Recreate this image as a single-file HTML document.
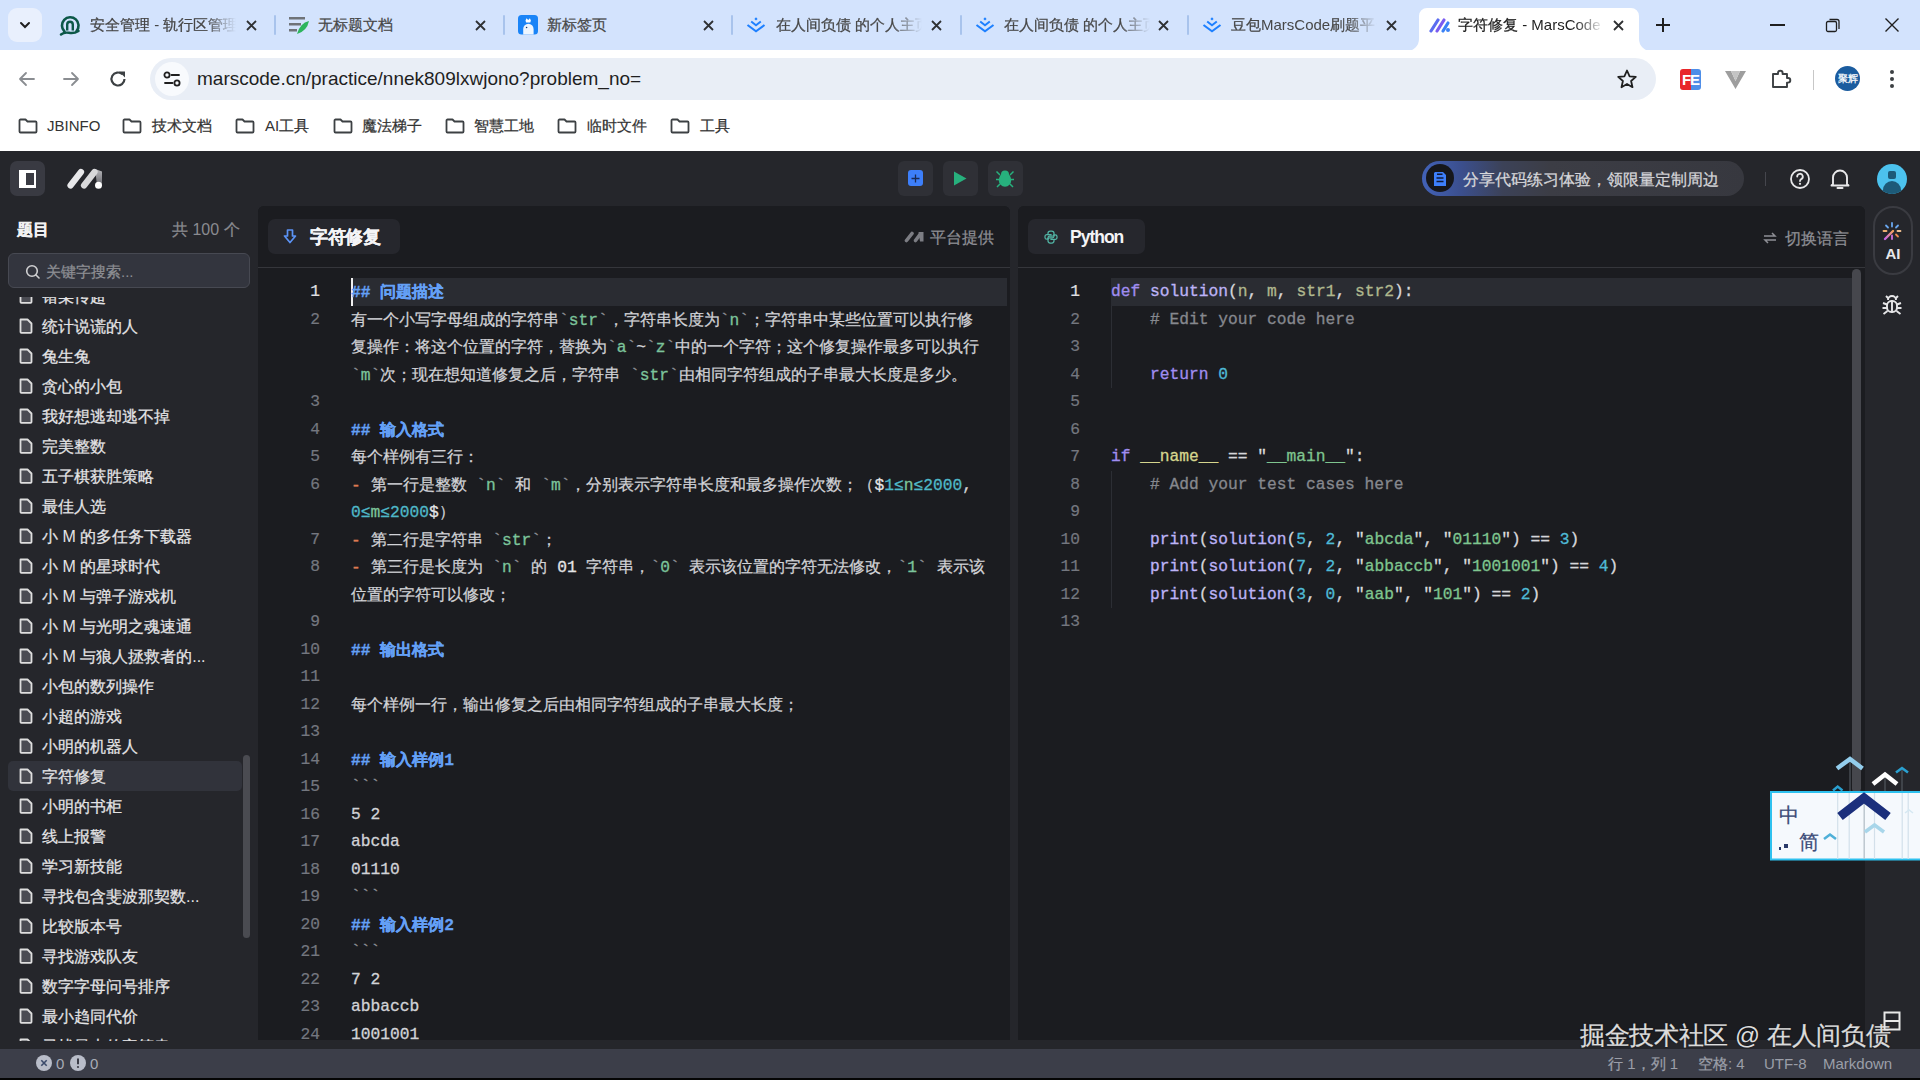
<!DOCTYPE html>
<html><head><meta charset="utf-8">
<style>
*{margin:0;padding:0;box-sizing:border-box}
html,body{width:1920px;height:1080px;overflow:hidden;background:#000;font-family:"Liberation Sans",sans-serif}
.abs{position:absolute}
#tabstrip{position:absolute;left:0;top:0;width:1920px;height:50px;background:#d3e3fd}
#toolbar{position:absolute;left:0;top:50px;width:1920px;height:55px;background:#fff}
#bookmarks{position:absolute;left:0;top:105px;width:1920px;height:46px;background:#fff}
#app{position:absolute;left:0;top:151px;width:1920px;height:929px;background:#25262b}
.tab{position:absolute;top:8px;height:42px;font-size:15px;color:#474747}
.tabtxt{position:absolute;top:16px;font-size:15px;line-height:18px;color:#474747;white-space:nowrap;overflow:hidden}
.fade{-webkit-mask-image:linear-gradient(90deg,#000 80%,transparent 100%)}
.tabx{position:absolute;top:15px;font-size:15px;line-height:18px;color:#1f1f1f;font-weight:bold}
.sep{position:absolute;top:15px;width:2px;height:20px;background:#a8c3ec;border-radius:1px}
.bm{position:absolute;top:12px;font-size:15px;line-height:18px;color:#333;white-space:nowrap}
.folder{position:absolute;top:13px;width:20px;height:16px}
#apphead{position:absolute;left:0;top:0;width:1920px;height:54px}
#sidebar{position:absolute;left:0;top:54px;width:258px;height:843px;background:#25262b}
.item{position:absolute;left:8px;width:234px;height:30px;font-size:16px;line-height:18px;color:#e4e4e6;white-space:nowrap}
.item.sel::before{content:"";position:absolute;left:0;top:-1px;width:100%;height:30px;background:#31333b;border-radius:5px}
.item .ic{position:absolute;left:11px;top:6px}
.item span{position:absolute;left:34px;top:6px}
#lpanel{position:absolute;left:258px;top:55px;width:752px;height:834px;background:#1b1c20;border-radius:6px 6px 0 0;overflow:hidden}
#rpanel{position:absolute;left:1018px;top:55px;width:847px;height:834px;background:#1b1c20;border-radius:6px 6px 0 0;overflow:hidden}
.phead{position:absolute;left:0;top:0;width:100%;height:62px;background:#1b1c20;border-bottom:1px solid #35363b}
.ln{position:absolute;left:12px;width:50px;height:28px;line-height:28px;font-family:"Liberation Mono",monospace;font-size:16.25px;color:#74777f;text-align:right;-webkit-text-stroke:0.2px currentColor}
.ln.act{color:#e0e0e4}
.tx{position:absolute;left:93px;height:28px;line-height:28px;font-family:"Liberation Mono",monospace;font-size:16.25px;color:#d4d4d8;white-space:pre}
.tx i{font-style:normal;-webkit-text-stroke:0.3px currentColor}
.tx i.z{font-family:"Liberation Sans",sans-serif;font-size:16px;-webkit-text-stroke:0}
.hl{background:#2a2c32}
.h{color:#64a0f6;font-weight:bold}.t{color:#d2d3d7}.c{color:#7cc49b}.bt{color:#8d8f95}.lm{color:#dd7a52}.mt{color:#4fb8c8}.mg{color:#7cc49b}.w{color:#e4e4e6}
.kw{color:#a08df0}.fn{color:#bdb3f6}.pa{color:#b0b88e}.cm{color:#86888e}.nu{color:#4fbad6}.st{color:#7fc58f}.op{color:#d6d6da}.q{color:#dcdcdc}.dn{color:#d6d68e}
#status{position:absolute;left:0;top:898px;width:1920px;height:29px;background:#3c3e49;font-size:15px;color:#9a9ca6}
.cj{display:inline-block;width:1em;text-align:center;font-weight:inherit;font-style:normal;-webkit-text-stroke:0.25px currentColor}
</style></head><body>
<div id="tabstrip">
  <div class="abs" style="left:8px;top:8px;width:34px;height:34px;border-radius:9px;background:#e9f0fd"></div>
  <svg class="abs" style="left:18px;top:18px" width="14" height="14" viewBox="0 0 14 14"><path d="M3 5 L7 9 L11 5" stroke="#1f1f1f" stroke-width="2" fill="none" stroke-linecap="round"/></svg>
  <!-- tab1 -->
  <svg class="abs" style="left:59px;top:13px" width="22" height="23" viewBox="0 0 22 23"><path d="M5.5 18.5 A8.3 8.3 0 1 1 17.5 18" stroke="#0c5848" stroke-width="2.6" fill="none" stroke-linecap="round"/><path d="M8.2 17.5 V11.5 a2.8 2.8 0 0 1 5.6 0 V17.5" stroke="#0c5848" stroke-width="2.4" fill="none"/><path d="M2 21.5 Q5 19 10 19.8 Q15 20.8 19.5 18" stroke="#0c5848" stroke-width="2.4" fill="none" stroke-linecap="round"/></svg>
  <div class="tabtxt fade" style="left:90px;width:146px"><b class="cj">安</b><b class="cj">全</b><b class="cj">管</b><b class="cj">理</b> - <b class="cj">轨</b><b class="cj">行</b><b class="cj">区</b><b class="cj">管</b><b class="cj">理</b></div>
  <svg class="abs" style="left:246px;top:20px" width="11" height="11" viewBox="0 0 11 11"><path d="M1 1 L10 10 M10 1 L1 10" stroke="#2f3133" stroke-width="1.8"/></svg>
  <div class="sep" style="left:274px"></div>
  <!-- tab2 -->
  <svg class="abs" style="left:288px;top:15px" width="22" height="20" viewBox="0 0 22 20"><rect x="1" y="2" width="16" height="2.5" fill="#6f7378"/><rect x="1" y="8" width="12" height="2.5" fill="#6f7378"/><rect x="1" y="14" width="8" height="2.5" fill="#6f7378"/><path d="M9 19 Q12 8 21 6 Q19 16 9 19Z" fill="#2db55d"/></svg>
  <div class="tabtxt" style="left:318px;width:150px"><b class="cj">无</b><b class="cj">标</b><b class="cj">题</b><b class="cj">文</b><b class="cj">档</b></div>
  <svg class="abs" style="left:475px;top:20px" width="11" height="11" viewBox="0 0 11 11"><path d="M1 1 L10 10 M10 1 L1 10" stroke="#2f3133" stroke-width="1.8"/></svg>
  <div class="sep" style="left:503px"></div>
  <!-- tab3 -->
  <svg class="abs" style="left:518px;top:15px" width="20" height="20" viewBox="0 0 20 20"><rect x="0" y="0" width="20" height="19.6" rx="3.5" fill="#1a84f7"/><path d="M5.2 19.6 V14 a5.2 5.2 0 0 1 10.4 0 V19.6Z" fill="#eef6ff"/><path d="M7.5 5.5 L8.5 3.2 L10.2 5 L11.9 3.2 L12.9 5.5 L12.3 7.5 H8.1Z" fill="#fff"/><circle cx="8.6" cy="12.5" r="0.8" fill="#1a3a6a"/></svg>
  <div class="tabtxt" style="left:547px;width:150px"><b class="cj">新</b><b class="cj">标</b><b class="cj">签</b><b class="cj">页</b></div>
  <svg class="abs" style="left:703px;top:20px" width="11" height="11" viewBox="0 0 11 11"><path d="M1 1 L10 10 M10 1 L1 10" stroke="#2f3133" stroke-width="1.8"/></svg>
  <div class="sep" style="left:731px"></div>
  <!-- tab4 -->
  <svg class="abs" style="left:746px;top:16px" width="20" height="18" viewBox="0 0 20 18"><path d="M1.5 9 L10 15.3 L18.5 9" stroke="#1e80ff" stroke-width="2.1" fill="none"/><path d="M5.2 5.5 L10 9.2 L14.8 5.5" stroke="#1e80ff" stroke-width="2" fill="none"/><path d="M10 1.3 L11.6 2.9 L10 4.5 L8.4 2.9Z" fill="#1e80ff"/></svg>
  <div class="tabtxt fade" style="left:776px;width:146px"><b class="cj">在</b><b class="cj">人</b><b class="cj">间</b><b class="cj">负</b><b class="cj">债</b> <b class="cj">的</b><b class="cj">个</b><b class="cj">人</b><b class="cj">主</b><b class="cj">页</b></div>
  <svg class="abs" style="left:931px;top:20px" width="11" height="11" viewBox="0 0 11 11"><path d="M1 1 L10 10 M10 1 L1 10" stroke="#2f3133" stroke-width="1.8"/></svg>
  <div class="sep" style="left:960px"></div>
  <!-- tab5 -->
  <svg class="abs" style="left:975px;top:16px" width="20" height="18" viewBox="0 0 20 18"><path d="M1.5 9 L10 15.3 L18.5 9" stroke="#1e80ff" stroke-width="2.1" fill="none"/><path d="M5.2 5.5 L10 9.2 L14.8 5.5" stroke="#1e80ff" stroke-width="2" fill="none"/><path d="M10 1.3 L11.6 2.9 L10 4.5 L8.4 2.9Z" fill="#1e80ff"/></svg>
  <div class="tabtxt fade" style="left:1004px;width:146px"><b class="cj">在</b><b class="cj">人</b><b class="cj">间</b><b class="cj">负</b><b class="cj">债</b> <b class="cj">的</b><b class="cj">个</b><b class="cj">人</b><b class="cj">主</b><b class="cj">页</b></div>
  <svg class="abs" style="left:1158px;top:20px" width="11" height="11" viewBox="0 0 11 11"><path d="M1 1 L10 10 M10 1 L1 10" stroke="#2f3133" stroke-width="1.8"/></svg>
  <div class="sep" style="left:1187px"></div>
  <!-- tab6 -->
  <svg class="abs" style="left:1202px;top:16px" width="20" height="18" viewBox="0 0 20 18"><path d="M1.5 9 L10 15.3 L18.5 9" stroke="#1e80ff" stroke-width="2.1" fill="none"/><path d="M5.2 5.5 L10 9.2 L14.8 5.5" stroke="#1e80ff" stroke-width="2" fill="none"/><path d="M10 1.3 L11.6 2.9 L10 4.5 L8.4 2.9Z" fill="#1e80ff"/></svg>
  <div class="tabtxt fade" style="left:1231px;width:146px"><b class="cj">豆</b><b class="cj">包</b>MarsCode<b class="cj">刷</b><b class="cj">题</b><b class="cj">平</b><b class="cj">台</b></div>
  <svg class="abs" style="left:1386px;top:20px" width="11" height="11" viewBox="0 0 11 11"><path d="M1 1 L10 10 M10 1 L1 10" stroke="#2f3133" stroke-width="1.8"/></svg>
  <!-- active tab -->
  <svg class="abs" style="left:1404px;top:8px" width="250" height="43" viewBox="0 0 250 43"><path d="M3 43 A12 12 0 0 0 15 31 V8 A8 8 0 0 1 23 0 H227 A8 8 0 0 1 235 8 V31 A12 12 0 0 0 247 43 Z" fill="#fff"/></svg>
  <svg class="abs" style="left:1429px;top:16px" width="22" height="18" viewBox="0 0 22 18"><path d="M2 15 L9 4" stroke="#5b6cf0" stroke-width="3.2" stroke-linecap="round"/><path d="M8 15 L15 4" stroke="#7b5cf0" stroke-width="3.2" stroke-linecap="round"/><path d="M14 15 L19 7" stroke="#3b82f6" stroke-width="3.2" stroke-linecap="round"/><circle cx="19" cy="14" r="2" fill="#3b82f6"/></svg>
  <div class="tabtxt fade" style="left:1458px;width:146px;color:#1f1f1f"><b class="cj">字</b><b class="cj">符</b><b class="cj">修</b><b class="cj">复</b> - MarsCode</div>
  <svg class="abs" style="left:1613px;top:20px" width="11" height="11" viewBox="0 0 11 11"><path d="M1 1 L10 10 M10 1 L1 10" stroke="#2f3133" stroke-width="1.8"/></svg>
  <!-- new tab -->
  <svg class="abs" style="left:1654px;top:16px" width="18" height="18" viewBox="0 0 18 18"><path d="M9 2 V16 M2 9 H16" stroke="#1f1f1f" stroke-width="2"/></svg>
  <!-- window controls -->
  <div class="abs" style="left:1770px;top:24px;width:15px;height:1.5px;background:#1f1f1f"></div>
  <svg class="abs" style="left:1824px;top:16px" width="18" height="18" viewBox="0 0 18 18"><rect x="2.5" y="5.5" width="10" height="10" rx="1.5" stroke="#1f1f1f" stroke-width="1.3" fill="none"/><path d="M5.5 3.5 H13 a2 2 0 0 1 2 2 V13" stroke="#1f1f1f" stroke-width="1.3" fill="none"/></svg>
  <svg class="abs" style="left:1884px;top:17px" width="16" height="16" viewBox="0 0 16 16"><path d="M1.5 1.5 L14.5 14.5 M14.5 1.5 L1.5 14.5" stroke="#1f1f1f" stroke-width="1.4"/></svg>
</div>
<div id="toolbar">
  <svg class="abs" style="left:17px;top:19px" width="20" height="20" viewBox="0 0 20 20"><path d="M17 10 H3 M9 4 L3 10 L9 16" stroke="#8a8d91" stroke-width="1.8" fill="none" stroke-linecap="round" stroke-linejoin="round"/></svg>
  <svg class="abs" style="left:61px;top:19px" width="20" height="20" viewBox="0 0 20 20"><path d="M3 10 H17 M11 4 L17 10 L11 16" stroke="#8a8d91" stroke-width="1.8" fill="none" stroke-linecap="round" stroke-linejoin="round"/></svg>
  <svg class="abs" style="left:107px;top:18px" width="22" height="22" viewBox="0 0 22 22"><path d="M17.5 11 A6.5 6.5 0 1 1 15.5 6.3" stroke="#3c4043" stroke-width="2.2" fill="none"/><path d="M12 3.5 H18 V9.5 Z" fill="#3c4043"/></svg>
  <div class="abs" style="left:150px;top:8px;width:1506px;height:42px;border-radius:21px;background:#e9eef6"></div>
  <div class="abs" style="left:155px;top:12px;width:34px;height:34px;border-radius:17px;background:#f8fafd"></div>
  <svg class="abs" style="left:162px;top:20px" width="20" height="18" viewBox="0 0 20 18"><circle cx="5" cy="5" r="2.6" stroke="#1f1f1f" stroke-width="1.8" fill="none"/><path d="M9.5 5 H17" stroke="#1f1f1f" stroke-width="1.8" stroke-linecap="round"/><circle cx="15" cy="13" r="2.6" stroke="#1f1f1f" stroke-width="1.8" fill="none"/><path d="M3 13 H10.5" stroke="#1f1f1f" stroke-width="1.8" stroke-linecap="round"/></svg>
  <div class="abs" style="left:197px;top:18px;font-size:19px;line-height:22px;color:#1f1f1f;white-space:nowrap">marscode.cn/practice/nnek809lxwjono?problem_no=</div>
  <svg class="abs" style="left:1616px;top:18px" width="22" height="22" viewBox="0 0 22 22"><path d="M11 2.5 L13.6 8.3 L19.8 8.9 L15.1 13 L16.5 19.2 L11 16 L5.5 19.2 L6.9 13 L2.2 8.9 L8.4 8.3 Z" stroke="#1f1f1f" stroke-width="1.8" fill="none" stroke-linejoin="round"/></svg>
  <div class="abs" style="left:1680px;top:19px;width:21px;height:21px;border-radius:3px;background:linear-gradient(90deg,#e8262a 50%,#4d8ee8 50%);color:#fff;font-weight:bold;font-size:15px;line-height:21px;text-align:center;letter-spacing:-1px">FE</div>
  <svg class="abs" style="left:1725px;top:20px" width="21" height="19" viewBox="0 0 21 19"><path d="M0 1 H6 L10.5 11 L15 1 H21 L10.5 19 Z" fill="#9e9e9e"/><path d="M6 1 L10.5 11 L15 1" fill="#c4c4c4"/></svg>
  <svg class="abs" style="left:1770px;top:18px" width="22" height="22" viewBox="0 0 22 22"><path d="M3 6 H8 V5 a2.3 2.3 0 0 1 4.6 0 V6 H17 V10 H18 a2.3 2.3 0 0 1 0 4.6 H17 V19 H3 Z" stroke="#3c4043" stroke-width="1.9" fill="none" stroke-linejoin="round"/></svg>
  <div class="abs" style="left:1813px;top:20px;width:1px;height:20px;background:#c7c7c7"></div>
  <div class="abs" style="left:1835px;top:66px;"></div>
  <div class="abs" style="left:1835px;top:16px;width:25px;height:25px;border-radius:50%;background:#1b5c9f;color:#fff;font-size:10px;line-height:25px;text-align:center;letter-spacing:-1px"><b class="cj">聚</b><b class="cj">辉</b></div>
  <svg class="abs" style="left:1886px;top:19px" width="12" height="22" viewBox="0 0 12 22"><circle cx="6" cy="3" r="2" fill="#3c4043"/><circle cx="6" cy="10" r="2" fill="#3c4043"/><circle cx="6" cy="17" r="2" fill="#3c4043"/></svg>
</div>
<div id="bookmarks"><svg class="folder" style="left:18px" width="20" height="16" viewBox="0 0 20 16"><path d="M1.5 2.5 a1 1 0 0 1 1-1 H7.5 L9.5 3.5 H17.5 a1 1 0 0 1 1 1 V13.5 a1 1 0 0 1-1 1 H2.5 a1 1 0 0 1-1-1 Z" stroke="#3c4043" stroke-width="1.8" fill="none" stroke-linejoin="round"/></svg><div class="bm" style="left:47px">JBINFO</div><svg class="folder" style="left:122px" width="20" height="16" viewBox="0 0 20 16"><path d="M1.5 2.5 a1 1 0 0 1 1-1 H7.5 L9.5 3.5 H17.5 a1 1 0 0 1 1 1 V13.5 a1 1 0 0 1-1 1 H2.5 a1 1 0 0 1-1-1 Z" stroke="#3c4043" stroke-width="1.8" fill="none" stroke-linejoin="round"/></svg><div class="bm" style="left:152px"><b class="cj">技</b><b class="cj">术</b><b class="cj">文</b><b class="cj">档</b></div><svg class="folder" style="left:235px" width="20" height="16" viewBox="0 0 20 16"><path d="M1.5 2.5 a1 1 0 0 1 1-1 H7.5 L9.5 3.5 H17.5 a1 1 0 0 1 1 1 V13.5 a1 1 0 0 1-1 1 H2.5 a1 1 0 0 1-1-1 Z" stroke="#3c4043" stroke-width="1.8" fill="none" stroke-linejoin="round"/></svg><div class="bm" style="left:265px">AI<b class="cj">工</b><b class="cj">具</b></div><svg class="folder" style="left:333px" width="20" height="16" viewBox="0 0 20 16"><path d="M1.5 2.5 a1 1 0 0 1 1-1 H7.5 L9.5 3.5 H17.5 a1 1 0 0 1 1 1 V13.5 a1 1 0 0 1-1 1 H2.5 a1 1 0 0 1-1-1 Z" stroke="#3c4043" stroke-width="1.8" fill="none" stroke-linejoin="round"/></svg><div class="bm" style="left:362px"><b class="cj">魔</b><b class="cj">法</b><b class="cj">梯</b><b class="cj">子</b></div><svg class="folder" style="left:445px" width="20" height="16" viewBox="0 0 20 16"><path d="M1.5 2.5 a1 1 0 0 1 1-1 H7.5 L9.5 3.5 H17.5 a1 1 0 0 1 1 1 V13.5 a1 1 0 0 1-1 1 H2.5 a1 1 0 0 1-1-1 Z" stroke="#3c4043" stroke-width="1.8" fill="none" stroke-linejoin="round"/></svg><div class="bm" style="left:474px"><b class="cj">智</b><b class="cj">慧</b><b class="cj">工</b><b class="cj">地</b></div><svg class="folder" style="left:557px" width="20" height="16" viewBox="0 0 20 16"><path d="M1.5 2.5 a1 1 0 0 1 1-1 H7.5 L9.5 3.5 H17.5 a1 1 0 0 1 1 1 V13.5 a1 1 0 0 1-1 1 H2.5 a1 1 0 0 1-1-1 Z" stroke="#3c4043" stroke-width="1.8" fill="none" stroke-linejoin="round"/></svg><div class="bm" style="left:587px"><b class="cj">临</b><b class="cj">时</b><b class="cj">文</b><b class="cj">件</b></div><svg class="folder" style="left:670px" width="20" height="16" viewBox="0 0 20 16"><path d="M1.5 2.5 a1 1 0 0 1 1-1 H7.5 L9.5 3.5 H17.5 a1 1 0 0 1 1 1 V13.5 a1 1 0 0 1-1 1 H2.5 a1 1 0 0 1-1-1 Z" stroke="#3c4043" stroke-width="1.8" fill="none" stroke-linejoin="round"/></svg><div class="bm" style="left:700px"><b class="cj">工</b><b class="cj">具</b></div></div>
<div id="app">
<div id="apphead">
  <div class="abs" style="left:10px;top:10px;width:35px;height:35px;border-radius:7px;background:#393a42"></div>
  <div class="abs" style="left:19px;top:19px;width:17px;height:18px;background:#fff"></div>
  <div class="abs" style="left:26px;top:22px;width:8px;height:12px;background:#3a3b43"></div>
  <svg class="abs" style="left:66px;top:14px" width="38" height="26" viewBox="0 0 38 26"><defs><linearGradient id="lg1" x1="0" y1="0" x2="0" y2="1"><stop offset="0" stop-color="#b8b8bc"/><stop offset="1" stop-color="#6a6a70"/></linearGradient></defs><path d="M4.5 20.5 L15 7" stroke="#e8e8ea" stroke-width="6.2" stroke-linecap="round"/><path d="M29 4 L36 6.5 L36 20 L31 20Z" fill="url(#lg1)"/><path d="M18 20.5 L28.5 7" stroke="#d8d8da" stroke-width="6.2" stroke-linecap="round"/><circle cx="32.5" cy="20.2" r="3.5" fill="#fff"/></svg>
  <div class="abs" style="left:898px;top:10px;width:35px;height:35px;border-radius:6px;background:#2f3036"></div>
  <div class="abs" style="left:908px;top:19px;width:15px;height:16px;border-radius:3px;background:#3d7ffa"></div>
  <svg class="abs" style="left:910px;top:22px" width="11" height="11" viewBox="0 0 11 11"><path d="M5.5 1.5 V9.5 M1.5 5.5 H9.5" stroke="#1a2a55" stroke-width="1.3"/></svg>
  <div class="abs" style="left:943px;top:10px;width:35px;height:35px;border-radius:6px;background:#2f3036"></div>
  <svg class="abs" style="left:953px;top:20px" width="14" height="15" viewBox="0 0 14 15"><path d="M1 0.5 L13.5 7.5 L1 14.5Z" fill="#27b07d"/></svg>
  <div class="abs" style="left:988px;top:10px;width:35px;height:35px;border-radius:6px;background:#2f3036"></div>
  <svg class="abs" style="left:995px;top:18px" width="20" height="19" viewBox="0 0 20 19"><circle cx="10" cy="5.5" r="4" fill="#27b07d"/><ellipse cx="10" cy="11" rx="6.3" ry="6.8" fill="#27b07d"/><path d="M1.5 2.5 L5 6 M18.5 2.5 L15 6 M1 10.5 H4.5 M19 10.5 H15.5 M2 18 L5 15 M18 18 L15 15" stroke="#27b07d" stroke-width="1.5"/></svg>
  <div class="abs" style="left:1422px;top:10px;width:322px;height:35px;border-radius:18px;background:linear-gradient(90deg,#4262b8 0%,#3b4f8e 12%,#3c4258 25%,#3c3d45 40%,#37383f 100%)"></div>
  <div class="abs" style="left:1426px;top:13px;width:28px;height:28px;border-radius:14px;background:#16171b"></div>
  <svg class="abs" style="left:1433px;top:20px" width="14" height="15" viewBox="0 0 14 15"><path d="M2 1 H10 L13 4 V15 H1 V2Z" fill="#3d7ffa"/><path d="M4 3.2 H9.5 M3.5 7 H10.5 M3.5 10.5 H10.5" stroke="#101a38" stroke-width="1.4"/></svg>
  <div class="abs" style="left:1463px;top:19px;font-size:16px;line-height:19px;color:#d6d6da;white-space:nowrap"><b class="cj">分</b><b class="cj">享</b><b class="cj">代</b><b class="cj">码</b><b class="cj">练</b><b class="cj">习</b><b class="cj">体</b><b class="cj">验</b><b class="cj">，</b><b class="cj">领</b><b class="cj">限</b><b class="cj">量</b><b class="cj">定</b><b class="cj">制</b><b class="cj">周</b><b class="cj">边</b></div>
  <div class="abs" style="left:1765px;top:21px;width:1px;height:14px;background:#45464d"></div>
  <svg class="abs" style="left:1789px;top:17px" width="22" height="22" viewBox="0 0 22 22"><circle cx="11" cy="11" r="9" stroke="#e8e8ea" stroke-width="1.8" fill="none"/><path d="M8.2 8.6 a2.8 2.8 0 1 1 4 2.5 c-0.9 0.5 -1.2 1 -1.2 2" stroke="#e8e8ea" stroke-width="1.8" fill="none" stroke-linecap="round"/><circle cx="11" cy="15.8" r="1.1" fill="#e8e8ea"/></svg>
  <svg class="abs" style="left:1829px;top:16px" width="22" height="24" viewBox="0 0 22 24"><path d="M4 17 V10.5 a7 7 0 0 1 14 0 V17 L19.5 18.5 H2.5Z" stroke="#e8e8ea" stroke-width="1.9" fill="none" stroke-linejoin="round"/><path d="M8.5 21 H13.5" stroke="#e8e8ea" stroke-width="2" stroke-linecap="round"/></svg>
  <div class="abs" style="left:1877px;top:13px;width:30px;height:30px;border-radius:50%;background:#4cc2ee;overflow:hidden"><div class="abs" style="left:11px;top:7px;width:8px;height:8px;background:#1d5a78;border-radius:2px"></div><div class="abs" style="left:6px;top:17px;width:18px;height:14px;background:#1d5a78;border-radius:9px 9px 0 0"></div></div>
</div>
  <div id="sidebar">
  <div class="abs" style="left:17px;top:16px;font-size:16px;line-height:18px;font-weight:bold;color:#f2f2f2"><b class="cj">题</b><b class="cj">目</b></div>
  <div class="abs" style="left:172px;top:15px;font-size:16px;line-height:19px;color:#8a8b90;white-space:nowrap"><b class="cj">共</b> 100 <b class="cj">个</b></div>
  <div class="abs" style="left:8px;top:48px;width:242px;height:35px;border-radius:6px;background:#33353e;border:1px solid #474952"></div>
  <svg class="abs" style="left:25px;top:59px" width="16" height="16" viewBox="0 0 16 16"><circle cx="7" cy="7" r="5.3" stroke="#d0d0d2" stroke-width="1.6" fill="none"/><path d="M11 11 L14 14" stroke="#d0d0d2" stroke-width="1.6" stroke-linecap="round"/></svg>
  <div class="abs" style="left:46px;top:58px;font-size:15px;line-height:18px;color:#8e8f94;white-space:nowrap"><b class="cj">关</b><b class="cj">键</b><b class="cj">字</b><b class="cj">搜</b><b class="cj">索</b>...</div>
  <div class="abs" style="left:0;top:92px;width:258px;height:744px;overflow:hidden">
    <div class="item" style="top:-15px"><svg class="ic" width="14" height="16" viewBox="0 0 14 16"><path d="M1.5 1.5 H8.5 L12.5 5.5 V14 a0.8 0.8 0 0 1 -0.8 0.8 H2.3 a0.8 0.8 0 0 1 -0.8 -0.8Z" fill="#4b4c53" stroke="#dedede" stroke-width="1.8" stroke-linejoin="round"/></svg><span><b class="cj">错</b><b class="cj">某</b><b class="cj">传</b><b class="cj">超</b></span></div>
    <div class="item" style="top:15px"><svg class="ic" width="14" height="16" viewBox="0 0 14 16"><path d="M1.5 1.5 H8.5 L12.5 5.5 V14 a0.8 0.8 0 0 1 -0.8 0.8 H2.3 a0.8 0.8 0 0 1 -0.8 -0.8Z" fill="#4b4c53" stroke="#dedede" stroke-width="1.8" stroke-linejoin="round"/></svg><span><b class="cj">统</b><b class="cj">计</b><b class="cj">说</b><b class="cj">谎</b><b class="cj">的</b><b class="cj">人</b></span></div>
    <div class="item" style="top:45px"><svg class="ic" width="14" height="16" viewBox="0 0 14 16"><path d="M1.5 1.5 H8.5 L12.5 5.5 V14 a0.8 0.8 0 0 1 -0.8 0.8 H2.3 a0.8 0.8 0 0 1 -0.8 -0.8Z" fill="#4b4c53" stroke="#dedede" stroke-width="1.8" stroke-linejoin="round"/></svg><span><b class="cj">兔</b><b class="cj">生</b><b class="cj">兔</b></span></div>
    <div class="item" style="top:75px"><svg class="ic" width="14" height="16" viewBox="0 0 14 16"><path d="M1.5 1.5 H8.5 L12.5 5.5 V14 a0.8 0.8 0 0 1 -0.8 0.8 H2.3 a0.8 0.8 0 0 1 -0.8 -0.8Z" fill="#4b4c53" stroke="#dedede" stroke-width="1.8" stroke-linejoin="round"/></svg><span><b class="cj">贪</b><b class="cj">心</b><b class="cj">的</b><b class="cj">小</b><b class="cj">包</b></span></div>
    <div class="item" style="top:105px"><svg class="ic" width="14" height="16" viewBox="0 0 14 16"><path d="M1.5 1.5 H8.5 L12.5 5.5 V14 a0.8 0.8 0 0 1 -0.8 0.8 H2.3 a0.8 0.8 0 0 1 -0.8 -0.8Z" fill="#4b4c53" stroke="#dedede" stroke-width="1.8" stroke-linejoin="round"/></svg><span><b class="cj">我</b><b class="cj">好</b><b class="cj">想</b><b class="cj">逃</b><b class="cj">却</b><b class="cj">逃</b><b class="cj">不</b><b class="cj">掉</b></span></div>
    <div class="item" style="top:135px"><svg class="ic" width="14" height="16" viewBox="0 0 14 16"><path d="M1.5 1.5 H8.5 L12.5 5.5 V14 a0.8 0.8 0 0 1 -0.8 0.8 H2.3 a0.8 0.8 0 0 1 -0.8 -0.8Z" fill="#4b4c53" stroke="#dedede" stroke-width="1.8" stroke-linejoin="round"/></svg><span><b class="cj">完</b><b class="cj">美</b><b class="cj">整</b><b class="cj">数</b></span></div>
    <div class="item" style="top:165px"><svg class="ic" width="14" height="16" viewBox="0 0 14 16"><path d="M1.5 1.5 H8.5 L12.5 5.5 V14 a0.8 0.8 0 0 1 -0.8 0.8 H2.3 a0.8 0.8 0 0 1 -0.8 -0.8Z" fill="#4b4c53" stroke="#dedede" stroke-width="1.8" stroke-linejoin="round"/></svg><span><b class="cj">五</b><b class="cj">子</b><b class="cj">棋</b><b class="cj">获</b><b class="cj">胜</b><b class="cj">策</b><b class="cj">略</b></span></div>
    <div class="item" style="top:195px"><svg class="ic" width="14" height="16" viewBox="0 0 14 16"><path d="M1.5 1.5 H8.5 L12.5 5.5 V14 a0.8 0.8 0 0 1 -0.8 0.8 H2.3 a0.8 0.8 0 0 1 -0.8 -0.8Z" fill="#4b4c53" stroke="#dedede" stroke-width="1.8" stroke-linejoin="round"/></svg><span><b class="cj">最</b><b class="cj">佳</b><b class="cj">人</b><b class="cj">选</b></span></div>
    <div class="item" style="top:225px"><svg class="ic" width="14" height="16" viewBox="0 0 14 16"><path d="M1.5 1.5 H8.5 L12.5 5.5 V14 a0.8 0.8 0 0 1 -0.8 0.8 H2.3 a0.8 0.8 0 0 1 -0.8 -0.8Z" fill="#4b4c53" stroke="#dedede" stroke-width="1.8" stroke-linejoin="round"/></svg><span><b class="cj">小</b> M <b class="cj">的</b><b class="cj">多</b><b class="cj">任</b><b class="cj">务</b><b class="cj">下</b><b class="cj">载</b><b class="cj">器</b></span></div>
    <div class="item" style="top:255px"><svg class="ic" width="14" height="16" viewBox="0 0 14 16"><path d="M1.5 1.5 H8.5 L12.5 5.5 V14 a0.8 0.8 0 0 1 -0.8 0.8 H2.3 a0.8 0.8 0 0 1 -0.8 -0.8Z" fill="#4b4c53" stroke="#dedede" stroke-width="1.8" stroke-linejoin="round"/></svg><span><b class="cj">小</b> M <b class="cj">的</b><b class="cj">星</b><b class="cj">球</b><b class="cj">时</b><b class="cj">代</b></span></div>
    <div class="item" style="top:285px"><svg class="ic" width="14" height="16" viewBox="0 0 14 16"><path d="M1.5 1.5 H8.5 L12.5 5.5 V14 a0.8 0.8 0 0 1 -0.8 0.8 H2.3 a0.8 0.8 0 0 1 -0.8 -0.8Z" fill="#4b4c53" stroke="#dedede" stroke-width="1.8" stroke-linejoin="round"/></svg><span><b class="cj">小</b> M <b class="cj">与</b><b class="cj">弹</b><b class="cj">子</b><b class="cj">游</b><b class="cj">戏</b><b class="cj">机</b></span></div>
    <div class="item" style="top:315px"><svg class="ic" width="14" height="16" viewBox="0 0 14 16"><path d="M1.5 1.5 H8.5 L12.5 5.5 V14 a0.8 0.8 0 0 1 -0.8 0.8 H2.3 a0.8 0.8 0 0 1 -0.8 -0.8Z" fill="#4b4c53" stroke="#dedede" stroke-width="1.8" stroke-linejoin="round"/></svg><span><b class="cj">小</b> M <b class="cj">与</b><b class="cj">光</b><b class="cj">明</b><b class="cj">之</b><b class="cj">魂</b><b class="cj">速</b><b class="cj">通</b></span></div>
    <div class="item" style="top:345px"><svg class="ic" width="14" height="16" viewBox="0 0 14 16"><path d="M1.5 1.5 H8.5 L12.5 5.5 V14 a0.8 0.8 0 0 1 -0.8 0.8 H2.3 a0.8 0.8 0 0 1 -0.8 -0.8Z" fill="#4b4c53" stroke="#dedede" stroke-width="1.8" stroke-linejoin="round"/></svg><span><b class="cj">小</b> M <b class="cj">与</b><b class="cj">狼</b><b class="cj">人</b><b class="cj">拯</b><b class="cj">救</b><b class="cj">者</b><b class="cj">的</b>...</span></div>
    <div class="item" style="top:375px"><svg class="ic" width="14" height="16" viewBox="0 0 14 16"><path d="M1.5 1.5 H8.5 L12.5 5.5 V14 a0.8 0.8 0 0 1 -0.8 0.8 H2.3 a0.8 0.8 0 0 1 -0.8 -0.8Z" fill="#4b4c53" stroke="#dedede" stroke-width="1.8" stroke-linejoin="round"/></svg><span><b class="cj">小</b><b class="cj">包</b><b class="cj">的</b><b class="cj">数</b><b class="cj">列</b><b class="cj">操</b><b class="cj">作</b></span></div>
    <div class="item" style="top:405px"><svg class="ic" width="14" height="16" viewBox="0 0 14 16"><path d="M1.5 1.5 H8.5 L12.5 5.5 V14 a0.8 0.8 0 0 1 -0.8 0.8 H2.3 a0.8 0.8 0 0 1 -0.8 -0.8Z" fill="#4b4c53" stroke="#dedede" stroke-width="1.8" stroke-linejoin="round"/></svg><span><b class="cj">小</b><b class="cj">超</b><b class="cj">的</b><b class="cj">游</b><b class="cj">戏</b></span></div>
    <div class="item" style="top:435px"><svg class="ic" width="14" height="16" viewBox="0 0 14 16"><path d="M1.5 1.5 H8.5 L12.5 5.5 V14 a0.8 0.8 0 0 1 -0.8 0.8 H2.3 a0.8 0.8 0 0 1 -0.8 -0.8Z" fill="#4b4c53" stroke="#dedede" stroke-width="1.8" stroke-linejoin="round"/></svg><span><b class="cj">小</b><b class="cj">明</b><b class="cj">的</b><b class="cj">机</b><b class="cj">器</b><b class="cj">人</b></span></div>
    <div class="item sel" style="top:465px"><svg class="ic" width="14" height="16" viewBox="0 0 14 16"><path d="M1.5 1.5 H8.5 L12.5 5.5 V14 a0.8 0.8 0 0 1 -0.8 0.8 H2.3 a0.8 0.8 0 0 1 -0.8 -0.8Z" fill="#4b4c53" stroke="#dedede" stroke-width="1.8" stroke-linejoin="round"/></svg><span><b class="cj">字</b><b class="cj">符</b><b class="cj">修</b><b class="cj">复</b></span></div>
    <div class="item" style="top:495px"><svg class="ic" width="14" height="16" viewBox="0 0 14 16"><path d="M1.5 1.5 H8.5 L12.5 5.5 V14 a0.8 0.8 0 0 1 -0.8 0.8 H2.3 a0.8 0.8 0 0 1 -0.8 -0.8Z" fill="#4b4c53" stroke="#dedede" stroke-width="1.8" stroke-linejoin="round"/></svg><span><b class="cj">小</b><b class="cj">明</b><b class="cj">的</b><b class="cj">书</b><b class="cj">柜</b></span></div>
    <div class="item" style="top:525px"><svg class="ic" width="14" height="16" viewBox="0 0 14 16"><path d="M1.5 1.5 H8.5 L12.5 5.5 V14 a0.8 0.8 0 0 1 -0.8 0.8 H2.3 a0.8 0.8 0 0 1 -0.8 -0.8Z" fill="#4b4c53" stroke="#dedede" stroke-width="1.8" stroke-linejoin="round"/></svg><span><b class="cj">线</b><b class="cj">上</b><b class="cj">报</b><b class="cj">警</b></span></div>
    <div class="item" style="top:555px"><svg class="ic" width="14" height="16" viewBox="0 0 14 16"><path d="M1.5 1.5 H8.5 L12.5 5.5 V14 a0.8 0.8 0 0 1 -0.8 0.8 H2.3 a0.8 0.8 0 0 1 -0.8 -0.8Z" fill="#4b4c53" stroke="#dedede" stroke-width="1.8" stroke-linejoin="round"/></svg><span><b class="cj">学</b><b class="cj">习</b><b class="cj">新</b><b class="cj">技</b><b class="cj">能</b></span></div>
    <div class="item" style="top:585px"><svg class="ic" width="14" height="16" viewBox="0 0 14 16"><path d="M1.5 1.5 H8.5 L12.5 5.5 V14 a0.8 0.8 0 0 1 -0.8 0.8 H2.3 a0.8 0.8 0 0 1 -0.8 -0.8Z" fill="#4b4c53" stroke="#dedede" stroke-width="1.8" stroke-linejoin="round"/></svg><span><b class="cj">寻</b><b class="cj">找</b><b class="cj">包</b><b class="cj">含</b><b class="cj">斐</b><b class="cj">波</b><b class="cj">那</b><b class="cj">契</b><b class="cj">数</b>...</span></div>
    <div class="item" style="top:615px"><svg class="ic" width="14" height="16" viewBox="0 0 14 16"><path d="M1.5 1.5 H8.5 L12.5 5.5 V14 a0.8 0.8 0 0 1 -0.8 0.8 H2.3 a0.8 0.8 0 0 1 -0.8 -0.8Z" fill="#4b4c53" stroke="#dedede" stroke-width="1.8" stroke-linejoin="round"/></svg><span><b class="cj">比</b><b class="cj">较</b><b class="cj">版</b><b class="cj">本</b><b class="cj">号</b></span></div>
    <div class="item" style="top:645px"><svg class="ic" width="14" height="16" viewBox="0 0 14 16"><path d="M1.5 1.5 H8.5 L12.5 5.5 V14 a0.8 0.8 0 0 1 -0.8 0.8 H2.3 a0.8 0.8 0 0 1 -0.8 -0.8Z" fill="#4b4c53" stroke="#dedede" stroke-width="1.8" stroke-linejoin="round"/></svg><span><b class="cj">寻</b><b class="cj">找</b><b class="cj">游</b><b class="cj">戏</b><b class="cj">队</b><b class="cj">友</b></span></div>
    <div class="item" style="top:675px"><svg class="ic" width="14" height="16" viewBox="0 0 14 16"><path d="M1.5 1.5 H8.5 L12.5 5.5 V14 a0.8 0.8 0 0 1 -0.8 0.8 H2.3 a0.8 0.8 0 0 1 -0.8 -0.8Z" fill="#4b4c53" stroke="#dedede" stroke-width="1.8" stroke-linejoin="round"/></svg><span><b class="cj">数</b><b class="cj">字</b><b class="cj">字</b><b class="cj">母</b><b class="cj">问</b><b class="cj">号</b><b class="cj">排</b><b class="cj">序</b></span></div>
    <div class="item" style="top:705px"><svg class="ic" width="14" height="16" viewBox="0 0 14 16"><path d="M1.5 1.5 H8.5 L12.5 5.5 V14 a0.8 0.8 0 0 1 -0.8 0.8 H2.3 a0.8 0.8 0 0 1 -0.8 -0.8Z" fill="#4b4c53" stroke="#dedede" stroke-width="1.8" stroke-linejoin="round"/></svg><span><b class="cj">最</b><b class="cj">小</b><b class="cj">趋</b><b class="cj">同</b><b class="cj">代</b><b class="cj">价</b></span></div>
    <div class="item" style="top:735px"><svg class="ic" width="14" height="16" viewBox="0 0 14 16"><path d="M1.5 1.5 H8.5 L12.5 5.5 V14 a0.8 0.8 0 0 1 -0.8 0.8 H2.3 a0.8 0.8 0 0 1 -0.8 -0.8Z" fill="#4b4c53" stroke="#dedede" stroke-width="1.8" stroke-linejoin="round"/></svg><span><b class="cj">寻</b><b class="cj">找</b><b class="cj">最</b><b class="cj">大</b><b class="cj">的</b><b class="cj">字</b><b class="cj">符</b><b class="cj">串</b></span></div>
  </div>
  <div class="abs" style="left:243px;top:550px;width:7px;height:183px;border-radius:4px;background:#4a4b51"></div>
</div>
  <div id="lpanel"><div class="phead">
    <div class="abs" style="left:10px;top:13px;width:132px;height:35px;border-radius:7px;background:#26272d"></div>
    <svg class="abs" style="left:25px;top:23px" width="14" height="15" viewBox="0 0 14 15"><path d="M4.5 1 H9.5 V7 H12.5 L7 13.5 L1.5 7 H4.5Z" stroke="#5b93f5" stroke-width="1.7" fill="none" stroke-linejoin="round"/></svg>
    <div class="abs" style="left:52px;top:21px;font-size:17.5px;line-height:20px;font-weight:bold;color:#f4f4f6;white-space:nowrap"><b class="cj">字</b><b class="cj">符</b><b class="cj">修</b><b class="cj">复</b></div>
    <svg class="abs" style="left:646px;top:24px" width="22" height="14" viewBox="0 0 22 14"><path d="M2.5 10.5 L8 3.5" stroke="#7c7d83" stroke-width="3.6" stroke-linecap="round"/><path d="M11.5 10.5 L16 4.5" stroke="#7c7d83" stroke-width="3.6" stroke-linecap="round"/><path d="M14.5 2 L19.5 2 L19.5 11.5 L16 11.5 Z" fill="#7c7d83"/></svg>
    <div class="abs" style="left:672px;top:22px;font-size:16px;line-height:19px;color:#8e8f95;white-space:nowrap"><b class="cj">平</b><b class="cj">台</b><b class="cj">提</b><b class="cj">供</b></div>
  </div>
  <div class="abs hl" style="left:93px;top:72px;width:656px;height:28px"></div>
  <div class="abs" style="left:93px;top:72px;width:2px;height:28px;background:#f0f0f0"></div>
  <!--LEFT--><div class="ln act" style="top:72.0px">1</div><div class="tx" style="top:72.0px"><i class="h">## </i><i class="z h"><b class="cj">问</b><b class="cj">题</b><b class="cj">描</b><b class="cj">述</b></i></div>
<div class="ln" style="top:99.5px">2</div><div class="tx" style="top:99.5px"><i class="z t"><b class="cj">有</b><b class="cj">一</b><b class="cj">个</b><b class="cj">小</b><b class="cj">写</b><b class="cj">字</b><b class="cj">母</b><b class="cj">组</b><b class="cj">成</b><b class="cj">的</b><b class="cj">字</b><b class="cj">符</b><b class="cj">串</b></i><i class="bt">`</i><i class="c">str</i><i class="bt">`</i><i class="z t"><b class="cj">，</b><b class="cj">字</b><b class="cj">符</b><b class="cj">串</b><b class="cj">长</b><b class="cj">度</b><b class="cj">为</b></i><i class="bt">`</i><i class="c">n</i><i class="bt">`</i><i class="z t"><b class="cj">；</b><b class="cj">字</b><b class="cj">符</b><b class="cj">串</b><b class="cj">中</b><b class="cj">某</b><b class="cj">些</b><b class="cj">位</b><b class="cj">置</b><b class="cj">可</b><b class="cj">以</b><b class="cj">执</b><b class="cj">行</b><b class="cj">修</b></i></div>
<div class="tx" style="top:127.0px"><i class="z t"><b class="cj">复</b><b class="cj">操</b><b class="cj">作</b><b class="cj">：</b><b class="cj">将</b><b class="cj">这</b><b class="cj">个</b><b class="cj">位</b><b class="cj">置</b><b class="cj">的</b><b class="cj">字</b><b class="cj">符</b><b class="cj">，</b><b class="cj">替</b><b class="cj">换</b><b class="cj">为</b></i><i class="bt">`</i><i class="c">a</i><i class="bt">`</i><i class="t">~</i><i class="bt">`</i><i class="c">z</i><i class="bt">`</i><i class="z t"><b class="cj">中</b><b class="cj">的</b><b class="cj">一</b><b class="cj">个</b><b class="cj">字</b><b class="cj">符</b><b class="cj">；</b><b class="cj">这</b><b class="cj">个</b><b class="cj">修</b><b class="cj">复</b><b class="cj">操</b><b class="cj">作</b><b class="cj">最</b><b class="cj">多</b><b class="cj">可</b><b class="cj">以</b><b class="cj">执</b><b class="cj">行</b></i></div>
<div class="tx" style="top:154.5px"><i class="bt">`</i><i class="c">m</i><i class="bt">`</i><i class="z t"><b class="cj">次</b><b class="cj">；</b><b class="cj">现</b><b class="cj">在</b><b class="cj">想</b><b class="cj">知</b><b class="cj">道</b><b class="cj">修</b><b class="cj">复</b><b class="cj">之</b><b class="cj">后</b><b class="cj">，</b><b class="cj">字</b><b class="cj">符</b><b class="cj">串</b></i><i class="t"> </i><i class="bt">`</i><i class="c">str</i><i class="bt">`</i><i class="z t"><b class="cj">由</b><b class="cj">相</b><b class="cj">同</b><b class="cj">字</b><b class="cj">符</b><b class="cj">组</b><b class="cj">成</b><b class="cj">的</b><b class="cj">子</b><b class="cj">串</b><b class="cj">最</b><b class="cj">大</b><b class="cj">长</b><b class="cj">度</b><b class="cj">是</b><b class="cj">多</b><b class="cj">少</b><b class="cj">。</b></i></div>
<div class="ln" style="top:182.0px">3</div>
<div class="ln" style="top:209.5px">4</div><div class="tx" style="top:209.5px"><i class="h">## </i><i class="z h"><b class="cj">输</b><b class="cj">入</b><b class="cj">格</b><b class="cj">式</b></i></div>
<div class="ln" style="top:237.0px">5</div><div class="tx" style="top:237.0px"><i class="z t"><b class="cj">每</b><b class="cj">个</b><b class="cj">样</b><b class="cj">例</b><b class="cj">有</b><b class="cj">三</b><b class="cj">行</b><b class="cj">：</b></i></div>
<div class="ln" style="top:264.5px">6</div><div class="tx" style="top:264.5px"><i class="lm">-</i><i class="t"> </i><i class="z t"><b class="cj">第</b><b class="cj">一</b><b class="cj">行</b><b class="cj">是</b><b class="cj">整</b><b class="cj">数</b></i><i class="t"> </i><i class="bt">`</i><i class="c">n</i><i class="bt">`</i><i class="t"> </i><i class="z t"><b class="cj">和</b></i><i class="t"> </i><i class="bt">`</i><i class="c">m</i><i class="bt">`</i><i class="z t"><b class="cj">，</b><b class="cj">分</b><b class="cj">别</b><b class="cj">表</b><b class="cj">示</b><b class="cj">字</b><b class="cj">符</b><b class="cj">串</b><b class="cj">长</b><b class="cj">度</b><b class="cj">和</b><b class="cj">最</b><b class="cj">多</b><b class="cj">操</b><b class="cj">作</b><b class="cj">次</b><b class="cj">数</b><b class="cj">；</b><b class="cj">（</b></i><i class="w">$</i><i class="mt">1</i><i class="mt">≤</i><i class="mg">n</i><i class="mt">≤</i><i class="mt">2000</i><i class="t">,</i></div>
<div class="tx" style="top:292.0px"><i class="mt">0</i><i class="mt">≤</i><i class="mg">m</i><i class="mt">≤</i><i class="mt">2000</i><i class="w">$</i><i class="z t"><b class="cj">）</b></i></div>
<div class="ln" style="top:319.5px">7</div><div class="tx" style="top:319.5px"><i class="lm">-</i><i class="t"> </i><i class="z t"><b class="cj">第</b><b class="cj">二</b><b class="cj">行</b><b class="cj">是</b><b class="cj">字</b><b class="cj">符</b><b class="cj">串</b></i><i class="t"> </i><i class="bt">`</i><i class="c">str</i><i class="bt">`</i><i class="z t"><b class="cj">；</b></i></div>
<div class="ln" style="top:347.0px">8</div><div class="tx" style="top:347.0px"><i class="lm">-</i><i class="t"> </i><i class="z t"><b class="cj">第</b><b class="cj">三</b><b class="cj">行</b><b class="cj">是</b><b class="cj">长</b><b class="cj">度</b><b class="cj">为</b></i><i class="t"> </i><i class="bt">`</i><i class="c">n</i><i class="bt">`</i><i class="t"> </i><i class="z t"><b class="cj">的</b></i><i class="t"> </i><i class="w">01</i><i class="t"> </i><i class="z t"><b class="cj">字</b><b class="cj">符</b><b class="cj">串</b><b class="cj">，</b></i><i class="bt">`</i><i class="c">0</i><i class="bt">`</i><i class="t"> </i><i class="z t"><b class="cj">表</b><b class="cj">示</b><b class="cj">该</b><b class="cj">位</b><b class="cj">置</b><b class="cj">的</b><b class="cj">字</b><b class="cj">符</b><b class="cj">无</b><b class="cj">法</b><b class="cj">修</b><b class="cj">改</b><b class="cj">，</b></i><i class="bt">`</i><i class="c">1</i><i class="bt">`</i><i class="t"> </i><i class="z t"><b class="cj">表</b><b class="cj">示</b><b class="cj">该</b></i></div>
<div class="tx" style="top:374.5px"><i class="z t"><b class="cj">位</b><b class="cj">置</b><b class="cj">的</b><b class="cj">字</b><b class="cj">符</b><b class="cj">可</b><b class="cj">以</b><b class="cj">修</b><b class="cj">改</b><b class="cj">；</b></i></div>
<div class="ln" style="top:402.0px">9</div>
<div class="ln" style="top:429.5px">10</div><div class="tx" style="top:429.5px"><i class="h">## </i><i class="z h"><b class="cj">输</b><b class="cj">出</b><b class="cj">格</b><b class="cj">式</b></i></div>
<div class="ln" style="top:457.0px">11</div>
<div class="ln" style="top:484.5px">12</div><div class="tx" style="top:484.5px"><i class="z t"><b class="cj">每</b><b class="cj">个</b><b class="cj">样</b><b class="cj">例</b><b class="cj">一</b><b class="cj">行</b><b class="cj">，</b><b class="cj">输</b><b class="cj">出</b><b class="cj">修</b><b class="cj">复</b><b class="cj">之</b><b class="cj">后</b><b class="cj">由</b><b class="cj">相</b><b class="cj">同</b><b class="cj">字</b><b class="cj">符</b><b class="cj">组</b><b class="cj">成</b><b class="cj">的</b><b class="cj">子</b><b class="cj">串</b><b class="cj">最</b><b class="cj">大</b><b class="cj">长</b><b class="cj">度</b><b class="cj">；</b></i></div>
<div class="ln" style="top:512.0px">13</div>
<div class="ln" style="top:539.5px">14</div><div class="tx" style="top:539.5px"><i class="h">## </i><i class="z h"><b class="cj">输</b><b class="cj">入</b><b class="cj">样</b><b class="cj">例</b></i><i class="h">1</i></div>
<div class="ln" style="top:567.0px">15</div><div class="tx" style="top:567.0px"><i class="bt">```</i></div>
<div class="ln" style="top:594.5px">16</div><div class="tx" style="top:594.5px"><i class="t">5 2</i></div>
<div class="ln" style="top:622.0px">17</div><div class="tx" style="top:622.0px"><i class="t">abcda</i></div>
<div class="ln" style="top:649.5px">18</div><div class="tx" style="top:649.5px"><i class="t">01110</i></div>
<div class="ln" style="top:677.0px">19</div><div class="tx" style="top:677.0px"><i class="bt">```</i></div>
<div class="ln" style="top:704.5px">20</div><div class="tx" style="top:704.5px"><i class="h">## </i><i class="z h"><b class="cj">输</b><b class="cj">入</b><b class="cj">样</b><b class="cj">例</b></i><i class="h">2</i></div>
<div class="ln" style="top:732.0px">21</div><div class="tx" style="top:732.0px"><i class="bt">```</i></div>
<div class="ln" style="top:759.5px">22</div><div class="tx" style="top:759.5px"><i class="t">7 2</i></div>
<div class="ln" style="top:787.0px">23</div><div class="tx" style="top:787.0px"><i class="t">abbaccb</i></div>
<div class="ln" style="top:814.5px">24</div><div class="tx" style="top:814.5px"><i class="t">1001001</i></div>
<!--/LEFT-->
</div>
  <div id="rpanel"><div class="phead">
    <div class="abs" style="left:10px;top:13px;width:117px;height:35px;border-radius:7px;background:#26272d"></div>
    <svg class="abs" style="left:26px;top:24px" width="14" height="14" viewBox="0 0 14 14"><g fill="none" stroke="#52b5a5" stroke-width="1.25" stroke-linejoin="round"><path d="M10 6.2 V3.2 a2.2 2.2 0 0 0 -2.2 -2.2 H6.2 a2.2 2.2 0 0 0 -2.2 2.2 V4.6 H7.6 M4 4.6 H2.8 a1.8 1.8 0 0 0 -1.8 1.8 V7.4 a1.8 1.8 0 0 0 1.8 1.8 H4 V8 a1.8 1.8 0 0 1 1.8 -1.8 H8.2 a1.8 1.8 0 0 0 1.8 -1.8"/><path transform="rotate(180 7 7)" d="M10 6.2 V3.2 a2.2 2.2 0 0 0 -2.2 -2.2 H6.2 a2.2 2.2 0 0 0 -2.2 2.2 V4.6 H7.6 M4 4.6 H2.8 a1.8 1.8 0 0 0 -1.8 1.8 V7.4 a1.8 1.8 0 0 0 1.8 1.8 H4 V8 a1.8 1.8 0 0 1 1.8 -1.8 H8.2 a1.8 1.8 0 0 0 1.8 -1.8"/></g></svg>
    <div class="abs" style="left:52px;top:21px;font-size:17.5px;line-height:20px;font-weight:bold;color:#f4f4f6;white-space:nowrap;letter-spacing:-1px">Python</div>
    <svg class="abs" style="left:745px;top:26px" width="14" height="12" viewBox="0 0 14 12"><path d="M1 4 H12 L9 1 M13 8 H2 L5 11" stroke="#8e8f95" stroke-width="1.5" fill="none"/></svg>
    <div class="abs" style="left:767px;top:23px;font-size:16px;line-height:19px;color:#8e8f95;white-space:nowrap"><b class="cj">切</b><b class="cj">换</b><b class="cj">语</b><b class="cj">言</b></div>
  </div>
  <div class="abs hl" style="left:93px;top:72px;width:741px;height:28px"></div>
  <div class="abs" style="left:93px;top:100px;width:1px;height:82px;background:#2c2e34"></div>
  <div class="abs" style="left:93px;top:264.5px;width:1px;height:137.5px;background:#2c2e34"></div>
  <div class="abs" style="left:834px;top:63px;width:9px;height:524px;border-radius:5px;background:#46474d"></div>
  <!--RIGHT--><div class="ln act" style="top:72.0px">1</div><div class="tx" style="top:72.0px"><i class="kw">def</i><i class="t"> </i><i class="fn">solution</i><i class="op">(</i><i class="pa">n</i><i class="op">, </i><i class="pa">m</i><i class="op">, </i><i class="pa">str1</i><i class="op">, </i><i class="pa">str2</i><i class="op">):</i></div>
<div class="ln" style="top:99.5px">2</div><div class="tx" style="top:99.5px"><i class="cm">    # Edit your code here</i></div>
<div class="ln" style="top:127.0px">3</div>
<div class="ln" style="top:154.5px">4</div><div class="tx" style="top:154.5px"><i class="t">    </i><i class="kw">return</i><i class="t"> </i><i class="nu">0</i></div>
<div class="ln" style="top:182.0px">5</div>
<div class="ln" style="top:209.5px">6</div>
<div class="ln" style="top:237.0px">7</div><div class="tx" style="top:237.0px"><i class="kw">if</i><i class="t"> </i><i class="dn">__name__</i><i class="op"> == </i><i class="q">&quot;</i><i class="st">__main__</i><i class="q">&quot;</i><i class="op">:</i></div>
<div class="ln" style="top:264.5px">8</div><div class="tx" style="top:264.5px"><i class="cm">    # Add your test cases here</i></div>
<div class="ln" style="top:292.0px">9</div>
<div class="ln" style="top:319.5px">10</div><div class="tx" style="top:319.5px"><i class="t">    </i><i class="fn">print</i><i class="op">(</i><i class="fn">solution</i><i class="op">(</i><i class="nu">5</i><i class="op">, </i><i class="nu">2</i><i class="op">, </i><i class="q">&quot;</i><i class="st">abcda</i><i class="q">&quot;</i><i class="op">, </i><i class="q">&quot;</i><i class="st">01110</i><i class="q">&quot;</i><i class="op">) == </i><i class="nu">3</i><i class="op">)</i></div>
<div class="ln" style="top:347.0px">11</div><div class="tx" style="top:347.0px"><i class="t">    </i><i class="fn">print</i><i class="op">(</i><i class="fn">solution</i><i class="op">(</i><i class="nu">7</i><i class="op">, </i><i class="nu">2</i><i class="op">, </i><i class="q">&quot;</i><i class="st">abbaccb</i><i class="q">&quot;</i><i class="op">, </i><i class="q">&quot;</i><i class="st">1001001</i><i class="q">&quot;</i><i class="op">) == </i><i class="nu">4</i><i class="op">)</i></div>
<div class="ln" style="top:374.5px">12</div><div class="tx" style="top:374.5px"><i class="t">    </i><i class="fn">print</i><i class="op">(</i><i class="fn">solution</i><i class="op">(</i><i class="nu">3</i><i class="op">, </i><i class="nu">0</i><i class="op">, </i><i class="q">&quot;</i><i class="st">aab</i><i class="q">&quot;</i><i class="op">, </i><i class="q">&quot;</i><i class="st">101</i><i class="q">&quot;</i><i class="op">) == </i><i class="nu">2</i><i class="op">)</i></div>
<div class="ln" style="top:402.0px">13</div>
<!--/RIGHT-->
</div>
  <div id="status">
  <svg class="abs" style="left:36px;top:6px" width="16" height="16" viewBox="0 0 16 16"><circle cx="8" cy="8" r="8" fill="#b9bdc9"/><path d="M5.3 5.3 L10.7 10.7 M10.7 5.3 L5.3 10.7" stroke="#3b4a6a" stroke-width="1.6"/></svg>
  <div class="abs" style="left:56px;top:6px;font-size:15px;line-height:17px;color:#a8abb6">0</div>
  <svg class="abs" style="left:70px;top:6px" width="16" height="16" viewBox="0 0 16 16"><circle cx="8" cy="8" r="8" fill="#b9bdc9"/><path d="M8 3.5 V9.3" stroke="#3b3c47" stroke-width="2"/><circle cx="8" cy="12" r="1.1" fill="#3b3c47"/></svg>
  <div class="abs" style="left:90px;top:6px;font-size:15px;line-height:17px;color:#a8abb6">0</div>
  <div class="abs" style="left:1608px;top:6px;font-size:15px;line-height:17px;color:#9b9ea8;white-space:nowrap"><b class="cj">行</b> 1<b class="cj">，</b><b class="cj">列</b> 1</div>
  <div class="abs" style="left:1698px;top:6px;font-size:15px;line-height:17px;color:#9b9ea8;white-space:nowrap"><b class="cj">空</b><b class="cj">格</b>: 4</div>
  <div class="abs" style="left:1764px;top:6px;font-size:15px;line-height:17px;color:#9b9ea8;white-space:nowrap">UTF-8</div>
  <div class="abs" style="left:1823px;top:6px;font-size:15px;line-height:17px;color:#9b9ea8;white-space:nowrap">Markdown</div>
</div>
<div class="abs" style="left:0;top:927px;width:1920px;height:2px;background:#050505"></div>
<!-- right rail -->
<div class="abs" style="left:1873px;top:55px;width:40px;height:69px;border-radius:20px;border:2px solid #3a3b41"></div>
<svg class="abs" style="left:1881px;top:70px" width="22" height="22" viewBox="0 0 22 22"><path d="M4 18 L12 10" stroke="url(#wg)" stroke-width="2.4" stroke-linecap="round"/><defs><linearGradient id="wg" x1="0" y1="1" x2="1" y2="0"><stop offset="0" stop-color="#c964e8"/><stop offset="1" stop-color="#f5a25a"/></linearGradient></defs><path d="M11 2 V5.5" stroke="#6aa8f0" stroke-width="1.8" stroke-linecap="round"/><path d="M5 4.5 L7 6.5" stroke="#6aa8f0" stroke-width="1.8" stroke-linecap="round"/><path d="M17 4.5 L15 6.5" stroke="#6aa8f0" stroke-width="1.8" stroke-linecap="round"/><path d="M2.5 10 H5.5" stroke="#f0b070" stroke-width="1.8" stroke-linecap="round"/><path d="M16.5 10 H19.5" stroke="#f0c090" stroke-width="1.8" stroke-linecap="round"/><path d="M15 13.5 L17 15.5" stroke="#f08a50" stroke-width="1.8" stroke-linecap="round"/><path d="M11 14.5 V18" stroke="#d070e0" stroke-width="1.8" stroke-linecap="round"/></svg>
<div class="abs" style="left:1873px;top:94px;width:40px;text-align:center;font-size:15px;line-height:18px;font-weight:bold;color:#e8e8ea">AI</div>
<svg class="abs" style="left:1882px;top:143px" width="20" height="21" viewBox="0 0 20 21"><path d="M6 6 a4 4 0 0 1 8 0" stroke="#e6e6e8" stroke-width="1.9" fill="none"/><rect x="5" y="7" width="10" height="11" rx="4.5" stroke="#e6e6e8" stroke-width="1.9" fill="none"/><path d="M10 8 V18 M1 9 L5 10.5 M19 9 L15 10.5 M0.5 14 H5 M19.5 14 H15 M1.5 20 L5.5 17 M18.5 20 L14.5 17 M4 2 L6.5 4.5 M16 2 L13.5 4.5" stroke="#e6e6e8" stroke-width="1.9"/></svg>
<!-- IME overlay -->
<svg class="abs" style="left:1770px;top:600px" width="150" height="110" viewBox="0 0 150 110">
  <path d="M80 10 V41 M115 25 V41 M132 19 V41" stroke="#5a6068" stroke-width="1"/>
  <rect x="1" y="41" width="152" height="67.5" fill="#f5f9fd" stroke="#2ec1ef" stroke-width="2"/>
  <path d="M67.7 42 V108 M79.2 42 V108 M104.5 42 V108 M132.2 42 V108 M138.2 42 V108" stroke="#d3e0ea" stroke-width="1.2"/>
  <path d="M94.2 42 V108" stroke="#b9c3cc" stroke-width="1.4"/>
  <path d="M67 17.5 L80 8 L92.5 17.5" stroke="#93cdec" stroke-width="4.5" fill="none"/>
  <path d="M103 33 L115 23.5 L127 33" stroke="#ffffff" stroke-width="4.5" fill="none"/>
  <path d="M126 21.5 L132 17 L138 21.5" stroke="#2aa0d0" stroke-width="2.6" fill="none"/>
  <path d="M63 39.5 L67.7 35.5 L72.5 39.5" stroke="#2aa0d0" stroke-width="2.4" fill="none"/>
  <path d="M70 65.5 L94 47 L118 65.5" stroke="#1b2f7c" stroke-width="9" fill="none"/>
  <path d="M95 81 L104.5 74 L114 81" stroke="#a8d6ea" stroke-width="3.5" fill="none"/>
  <path d="M54 88 L60 83.5 L66 88" stroke="#4fb0d8" stroke-width="2.6" fill="none"/>
  <path d="M135 62 L139 59 L143 62" stroke="#d5e8f2" stroke-width="1.5" fill="none"/>
</svg>
<div class="abs" style="left:1779px;top:652px;font-size:20px;line-height:24px;color:#3c4b78"><b class="cj">中</b></div>
<div class="abs" style="left:1799px;top:679px;font-size:20px;line-height:24px;color:#3c4b78"><b class="cj">简</b></div>
<div class="abs" style="left:1784px;top:693px;width:4px;height:4px;background:#2a3a6a"></div><div class="abs" style="left:1779px;top:696px;width:2px;height:3px;background:#2a3a6a"></div>
<!-- watermark -->
<div class="abs" style="left:1580px;top:870px;font-size:24.7px;line-height:30px;color:#dcdcdc;white-space:nowrap;text-shadow:0 0 2px rgba(0,0,0,.4)"><b class="cj">掘</b><b class="cj">金</b><b class="cj">技</b><b class="cj">术</b><b class="cj">社</b><b class="cj">区</b> @ <b class="cj">在</b><b class="cj">人</b><b class="cj">间</b><b class="cj">负</b><b class="cj">债</b></div>
<svg class="abs" style="left:1883px;top:860px" width="18" height="20" viewBox="0 0 18 20"><rect x="1.5" y="1.5" width="15" height="17" stroke="#e8e8e8" stroke-width="2" fill="none"/><path d="M1.5 10 H16.5" stroke="#e8e8e8" stroke-width="2"/></svg>

</div>
</body></html>
